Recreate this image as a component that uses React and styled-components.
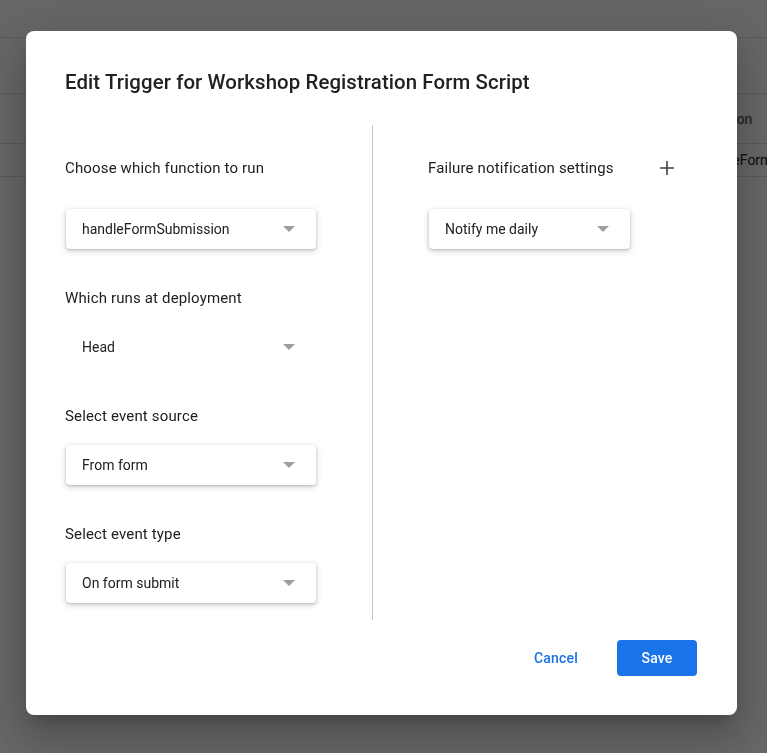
import React from 'react';
import styled, { createGlobalStyle } from 'styled-components';

// Trigger editor dialog, shown over the dimmed triggers table

const GlobalStyle = createGlobalStyle`
  html, body {
    margin: 0;
    padding: 0;
    width: 767px;
    height: 753px;
    overflow: hidden;
    background: #fff;
    font-family: Roboto, "Liberation Sans", Arial, sans-serif;
  }
  * { box-sizing: border-box; }
`;

const columns = ['Owned by', 'Last run', 'Deployment', 'Event', 'Function'];
const rowData = ['Me', 'Never', 'Head', 'From form - On form submit', 'handleFormSubmission'];

const leftFields = [
  { label: 'Which runs at deployment', value: 'Head', flat: true },
  { label: 'Select event source', value: 'From form' },
  { label: 'Select event type', value: 'On form submit' },
];

const App = () => {
  return (
    <>
      <GlobalStyle />
      <Page>
        <TopBar />
        <Toolbar />
        <TableRow $header>
          {columns.map((c) => <Cell key={c} $header>{c}</Cell>)}
        </TableRow>
        <TableRow>
          {rowData.map((c, i) => <Cell key={i}>{c}</Cell>)}
        </TableRow>
      </Page>

      <Scrim>
        <Dialog>
          <Title>Edit Trigger for Workshop Registration Form Script</Title>

          <Body>
            <LeftCol>
              <HeadRow>
                <Label>Choose which function to run</Label>
              </HeadRow>
              <Select $width={250}>
                <span>handleFormSubmission</span>
                <Arrow />
              </Select>

              {leftFields.map((f) => (
                <Field key={f.label}>
                  <Label>{f.label}</Label>
                  <Select $width={250} $flat={f.flat}>
                    <span>{f.value}</span>
                    <Arrow />
                  </Select>
                </Field>
              ))}
            </LeftCol>

            <Divider />

            <RightCol>
              <HeadRow>
                <Label>Failure notification settings</Label>
                <IconBtn aria-label="Add">
                  <svg width="16" height="16" viewBox="0 0 16 16">
                    <path d="M8 1v14M1 8h14" stroke="#3c4043" strokeWidth="1.6" fill="none" />
                  </svg>
                </IconBtn>
              </HeadRow>
              <Select $width={201}>
                <span>Notify me daily</span>
                <Arrow />
              </Select>
            </RightCol>
          </Body>

          <Footer>
            <TextBtn>Cancel</TextBtn>
            <PrimaryBtn>Save</PrimaryBtn>
          </Footer>
        </Dialog>
      </Scrim>
    </>
  );
};

export default App;

const Page = styled.div`
  width: 767px;
  height: 753px;
  background: #fff;
  overflow: hidden;
`;

const TopBar = styled.div`
  height: 38px;
  border-bottom: 1px solid #dadce0;
`;

const Toolbar = styled.div`
  height: 56px;
  border-bottom: 1px solid #dadce0;
`;

const TableRow = styled.div`
  display: grid;
  grid-template-columns: 120px 120px 150px 208px 1fr;
  align-items: center;
  height: ${(p) => (p.$header ? '50px' : '33px')};
  padding-left: 100px;
  border-bottom: 1px solid #dadce0;
  overflow: hidden;
`;

const Cell = styled.div`
  font-size: 14px;
  font-weight: ${(p) => (p.$header ? 500 : 400)};
  color: ${(p) => (p.$header ? '#5f6368' : '#202124')};
  white-space: nowrap;
  overflow: hidden;
`;

const Scrim = styled.div`
  position: fixed;
  inset: 0;
  background: rgba(0, 0, 0, 0.6);
  display: flex;
  align-items: flex-start;
  justify-content: flex-start;
  padding: 31px 0 0 26px;
`;

const Dialog = styled.div`
  width: 711px;
  height: 684px;
  background: #fff;
  border-radius: 8px;
  box-shadow: 0 11px 15px -7px rgba(0, 0, 0, 0.2), 0 24px 38px 3px rgba(0, 0, 0, 0.14), 0 9px 46px 8px rgba(0, 0, 0, 0.12);
  padding: 37px 40px 39px 39px;
  display: flex;
  flex-direction: column;
`;

const Title = styled.h2`
  margin: 0;
  font-size: 20.4px;
  line-height: 28px;
  font-weight: 500;
  color: #202124;
  letter-spacing: 0.1px;
`;

const Body = styled.div`
  display: flex;
  margin-top: 29px;
  height: 495px;
`;

const LeftCol = styled.div`
  width: 307px;
  padding-top: 23px;
  display: flex;
  flex-direction: column;
`;

const RightCol = styled.div`
  padding: 23px 0 0 55px;
  display: flex;
  flex-direction: column;
`;

const Divider = styled.div`
  width: 1px;
  background: #c4c7c5;
`;

const HeadRow = styled.div`
  display: flex;
  align-items: center;
  justify-content: space-between;
  width: 259px;
  height: 40px;
  margin-bottom: 21px;
`;

const Field = styled.div`
  display: flex;
  flex-direction: column;
  margin-top: 39px;
  gap: 19px;
`;

const Label = styled.div`
  font-size: 15px;
  line-height: 20px;
  color: #202124;
  letter-spacing: 0.15px;
`;

const IconBtn = styled.button`
  width: 40px;
  height: 40px;
  border: none;
  background: transparent;
  display: flex;
  align-items: center;
  justify-content: center;
  padding: 0;
`;

const Select = styled.div`
  width: ${(p) => p.$width}px;
  height: 40px;
  margin-left: 1px;
  display: flex;
  align-items: center;
  justify-content: space-between;
  padding: 0 21px 0 16px;
  border-radius: 4px;
  background: #fff;
  font-size: 14px;
  color: #202124;
  box-shadow: ${(p) => (p.$flat ? 'none' : '0 1px 3px rgba(0, 0, 0, 0.2), 0 2px 6px 1px rgba(0, 0, 0, 0.12)')};
`;

const Arrow = styled.span`
  width: 0;
  height: 0;
  border-left: 6px solid transparent;
  border-right: 6px solid transparent;
  border-top: 6px solid #9e9e9e;
`;

const Footer = styled.div`
  margin-top: auto;
  display: flex;
  justify-content: flex-end;
  align-items: center;
  gap: 23px;
`;

const TextBtn = styled.button`
  height: 36px;
  padding: 0 16px;
  border: none;
  background: transparent;
  color: #1a73e8;
  font-family: inherit;
  font-size: 14px;
  font-weight: 500;
  letter-spacing: 0.2px;
`;

const PrimaryBtn = styled.button`
  width: 80px;
  height: 36px;
  border: none;
  border-radius: 4px;
  background: #1a73e8;
  color: #fff;
  font-family: inherit;
  font-size: 14px;
  font-weight: 500;
  letter-spacing: 0.2px;
`;
